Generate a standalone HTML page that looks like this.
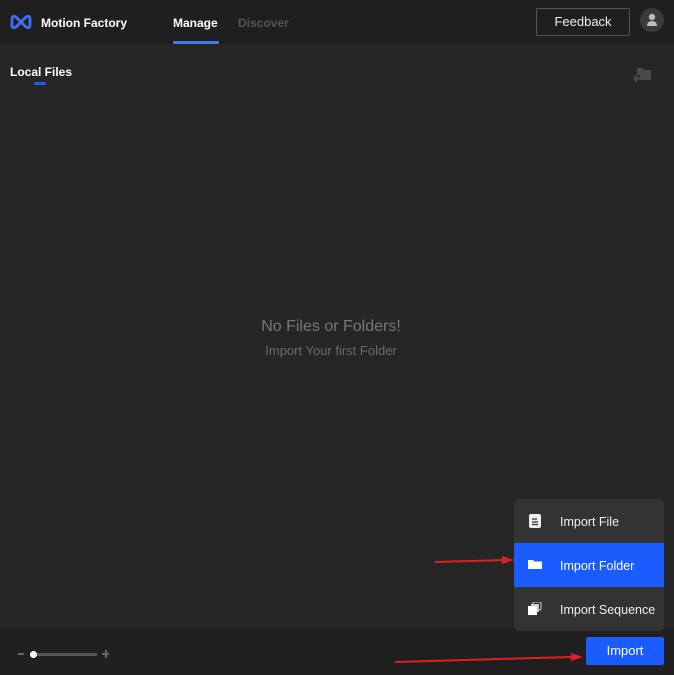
<!DOCTYPE html>
<html><head><style>
*{margin:0;padding:0;box-sizing:border-box}
body{width:674px;height:675px;background:#262626;font-family:"Liberation Sans",sans-serif;position:relative;overflow:hidden;color:#fff}
.hdr{position:absolute;left:0;top:0;width:674px;height:44px;background:#1f1f1f}
.t{position:absolute;font-weight:bold;font-size:12px;white-space:nowrap}
.foot{position:absolute;left:0;top:627px;width:674px;height:48px;background:#202020}
.menu{position:absolute;left:514px;top:499px;width:150px;height:132px;background:#333;border-radius:5px;overflow:hidden}
.it{position:absolute;left:0;width:150px;height:44px;font-size:12.5px;line-height:46px;padding-left:46px;color:#eee}
.it svg{position:absolute;left:14px;top:15px}
</style></head><body>
<div class="hdr"></div>
<svg style="position:absolute;left:9px;top:13px" width="24" height="18" viewBox="0 0 24 18"><path d="M3 14 V6 Q3 2 7 4 L17 14 Q21 16 21 12 V6 Q21 2 17 4 L7 14 Q3 16 3 12" fill="none" stroke="#3d6ff5" stroke-width="2.8" stroke-linejoin="round"/></svg>
<div class="t" style="left:41px;top:16px">Motion Factory</div>
<div class="t" style="left:173px;top:16px">Manage</div>
<div style="position:absolute;left:173px;top:41px;width:46px;height:3px;background:#4a72e8"></div>
<div class="t" style="left:238px;top:16px;color:#555">Discover</div>
<div style="position:absolute;left:536px;top:8px;width:94px;height:28px;border:1px solid #555;border-radius:2px;font-size:13px;text-align:center;line-height:26px;color:#eee">Feedback</div>
<div style="position:absolute;left:640px;top:8px;width:24px;height:24px;border-radius:50%;background:#3a3a3a"></div>
<svg style="position:absolute;left:645px;top:12px" width="14" height="16" viewBox="0 0 14 16"><circle cx="7" cy="5" r="3.2" fill="#bbb"/><path d="M2 14 Q2 9 7 9 Q12 9 12 14Z" fill="#bbb"/></svg>
<div class="t" style="left:10px;top:65px;font-size:12px">Local Files</div>
<div style="position:absolute;left:34px;top:82px;width:12px;height:3px;border-radius:2px;background:#1a5cff"></div>
<svg style="position:absolute;left:632px;top:67px" width="20" height="16" viewBox="0 0 20 16"><path d="M5 1h5l2 2h7v10H8V8H5z" fill="#4a4a4a"/><path d="M4 8v7M1 11.5h7" stroke="#4a4a4a" stroke-width="2"/></svg>
<div style="position:absolute;left:0;top:318px;width:662px;text-align:center;font-size:16px;color:#777">No Files or Folders!</div>
<div style="position:absolute;left:0;top:343px;width:662px;text-align:center;font-size:13px;color:#6a6a6a">Import Your first Folder</div>
<div class="foot"></div>
<div style="position:absolute;left:18px;top:653px;width:6px;height:2px;background:#666"></div>
<div style="position:absolute;left:33px;top:653px;width:64px;height:3px;background:#555"></div>
<div style="position:absolute;left:30px;top:651px;width:7px;height:7px;border-radius:50%;background:#fff"></div>
<div style="position:absolute;left:102px;top:653px;width:7px;height:2px;background:#666"></div>
<div style="position:absolute;left:105px;top:650px;width:2px;height:8px;background:#666"></div>
<div class="menu">
<div class="it" style="top:0">Import File<svg width="14" height="14" viewBox="0 0 14 14"><rect x="1" y="0" width="12" height="14" rx="2" fill="#eee"/><path d="M4 5h5M4 8h6M4 10.5h6" stroke="#333" stroke-width="1.2"/></svg></div>
<div class="it" style="top:44px;background:#1a5cff;color:#fff">Import Folder<svg width="14" height="12" viewBox="0 0 14 12"><path d="M0 2h5l1.5 1.5H14V11H0z" fill="#fff"/></svg></div>
<div class="it" style="top:88px">Import Sequence<svg width="14" height="14" viewBox="0 0 14 14"><rect x="5" y="0" width="8" height="8" fill="none" stroke="#ccc"/><rect x="3" y="2" width="8" height="8" fill="#ccc"/><rect x="0" y="4" width="9" height="9" fill="#fff"/></svg></div>
</div>
<div style="position:absolute;left:586px;top:637px;width:78px;height:28px;background:#1a5cff;border-radius:2px;font-size:13px;text-align:center;line-height:28px">Import</div>
<svg style="position:absolute;left:0;top:0" width="674" height="675"><path d="M435 562L505 560" stroke="#e02020" stroke-width="2"/><path d="M514 560l-12-4v8z" fill="#e02020"/><path d="M395 662L572 657" stroke="#e02020" stroke-width="2"/><path d="M583 657l-12-4v8z" fill="#e02020"/></svg>
</body></html>
